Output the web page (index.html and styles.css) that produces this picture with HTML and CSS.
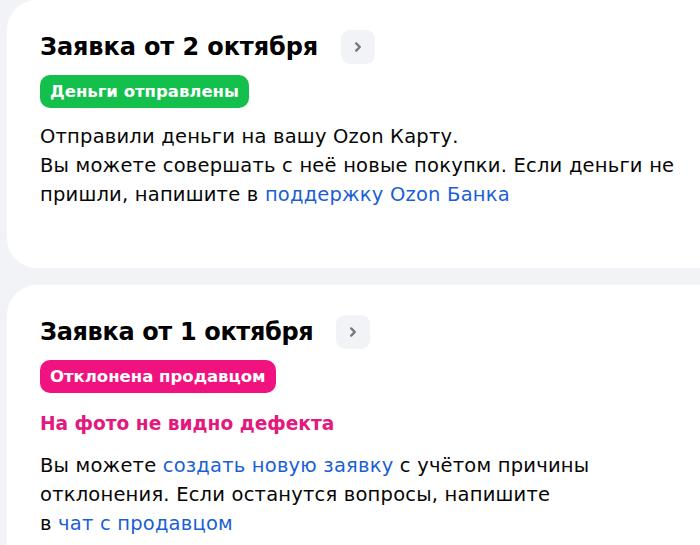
FILE: index.html
```html
<!DOCTYPE html>
<html lang="ru">
<head>
<meta charset="utf-8">
<link rel="stylesheet" href="styles.css">
</head>
<body>
<div class="page">
  <section class="card card-first">
    <div class="head">
      <h2 class="title">Заявка от 2 октября</h2>
      <button class="chev" aria-label="Открыть">
        <svg width="14" height="14" viewBox="0 0 14 14"><path d="M5.2 3.4 L8.8 7 L5.2 10.6" fill="none" stroke="#6f7a86" stroke-width="2.4" stroke-linecap="round" stroke-linejoin="round"/></svg>
      </button>
    </div>
    <span class="badge badge-green">Деньги отправлены</span>
    <p class="text text-wide">Отправили деньги на вашу Ozon Карту.<br>Вы можете совершать с неё новые покупки. Если деньги не пришли, напишите в <a class="link" href="#">поддержку Ozon Банка</a></p>
  </section>
  <section class="card card-second">
    <div class="head">
      <h2 class="title title-tight">Заявка от 1 октября</h2>
      <button class="chev" aria-label="Открыть">
        <svg width="14" height="14" viewBox="0 0 14 14"><path d="M5.2 3.4 L8.8 7 L5.2 10.6" fill="none" stroke="#6f7a86" stroke-width="2.4" stroke-linecap="round" stroke-linejoin="round"/></svg>
      </button>
    </div>
    <span class="badge badge-pink">Отклонена продавцом</span>
    <div class="reason">На фото не видно дефекта</div>
    <p class="text text-narrow">Вы можете <a class="link" href="#">создать новую заявку</a> с учётом причины отклонения. Если останутся вопросы, напишите <span class="nowrap">в <a class="link" href="#">чат с продавцом</a></span></p>
  </section>
</div>
</body>
</html>
```
FILE: styles.css
```css
* { box-sizing: border-box; }
html, body { margin: 0; padding: 0; }
body {
  background: #f2f3f7;
  font-family: "DejaVu Sans", Roboto, sans-serif;
  color: #070707;
  overflow: hidden;
  height: 545px;
}
.page {
  display: flex;
  flex-direction: column;
  gap: 17px;
  padding-left: 7px;
}
.card {
  background: #ffffff;
  border-radius: 30px 0 0 30px;
  padding: 30px 0 0 33px;
  display: flex;
  flex-direction: column;
  align-items: flex-start;
}
.card-first { height: 268px; }
.card-second { height: 300px; }
.head {
  display: flex;
  align-items: center;
  gap: 23px;
  height: 34px;
}
.title {
  margin: 0;
  font-family: "DejaVu Sans", sans-serif;
  font-weight: 700;
  font-size: 24px;
  letter-spacing: -0.1px;
  color: #000000;
}
.title-tight { letter-spacing: -0.35px; }
.chev {
  width: 34px;
  height: 34px;
  border: 0;
  border-radius: 9px;
  background: #f2f3f7;
  display: flex;
  align-items: center;
  justify-content: center;
  padding: 0;
}
.badge {
  margin-top: 11px;
  height: 33px;
  line-height: 33px;
  padding: 0 10px;
  border-radius: 10px;
  color: #fff;
  font-family: "DejaVu Sans", sans-serif;
  font-weight: 700;
  font-size: 16.5px;
}
.badge-green { background: #14c04c; }
.badge-pink { background: #f0127e; }
.reason {
  margin-top: 20px;
  font-family: "DejaVu Sans", sans-serif;
  font-weight: 700;
  font-size: 18.6px;
  color: #e3197d;
}
.text {
  margin: 14px 0 0;
  font-size: 19.5px;
  line-height: 29px;
  letter-spacing: 0.2px;
  color: #070707;
}
.text-wide { max-width: 660px; }
.text-narrow { margin-top: 17px; max-width: 615px; }
.nowrap { white-space: nowrap; }
.link { color: #1a5fd6; text-decoration: none; }
```
